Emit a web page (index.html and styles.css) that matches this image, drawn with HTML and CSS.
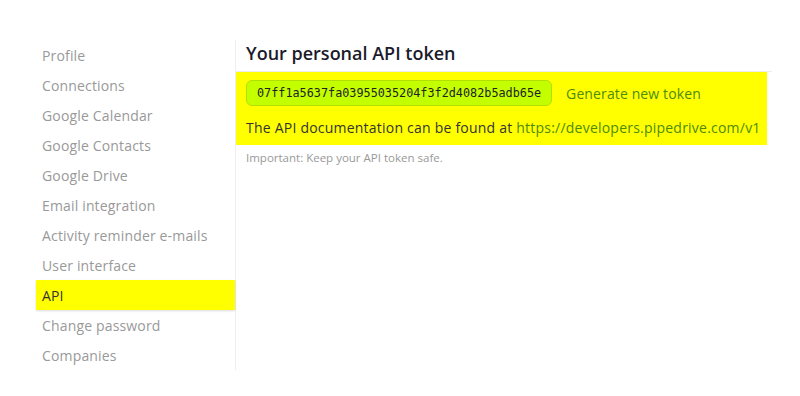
FILE: index.html
```html
<!DOCTYPE html>
<html lang="en">
<head>
  <meta charset="UTF-8">
  <title>Settings - API</title>
  <link rel="stylesheet" href="styles.css">
</head>
<body>
  <div class="container">
    <ul class="sidebar">
      <li><a href="#">Profile</a></li>
      <li><a href="#">Connections</a></li>
      <li><a href="#">Google Calendar</a></li>
      <li><a href="#">Google Contacts</a></li>
      <li><a href="#">Google Drive</a></li>
      <li><a href="#">Email integration</a></li>
      <li><a href="#">Activity reminder e-mails</a></li>
      <li><a href="#">User interface</a></li>
      <li class="selected"><a href="#">API</a></li>
      <li><a href="#">Change password</a></li>
      <li><a href="#">Companies</a></li>
    </ul>
    <div class="main">
      <h1>Your personal API token</h1>
      <div class="token-section">
        <div class="token-box">
          <div class="token-row">
            <span class="token">07ff1a5637fa03955035204f3f2d4082b5adb65e</span>
            <a href="#" class="generate">Generate new token</a>
          </div>
          <p class="docs">The API documentation can be found at <a href="#">https://developers.pipedrive.com/v1</a></p>
        </div>
        <p class="note">Important: Keep your API token safe.</p>
      </div>
    </div>
  </div>
</body>
</html>
```

FILE: styles.css
```css
body {
  font-family: "Open Sans", sans-serif;
  background: white;
  margin: 0;
  padding: 40px 0 0 36px;
}
.container {
  display: flex;
}
.sidebar {
  list-style: none;
  margin: 0;
  padding: 0;
  width: 199px;
  border-right: 1px solid #eee;
}
.sidebar li {
  height: 30px;
  font-size: 14px;
  letter-spacing: 0.16px;
}
.sidebar a {
  display: block;
  padding: 2px 0 0 6px;
  line-height: 28px;
  color: #999;
  text-decoration: none;
}
.sidebar .selected {
  background: #ffff00;
  box-shadow: 0 1px 2px rgba(0,0,0,0.15);
}
.sidebar .selected a {
  color: #333;
}
.main {
  width: 536px;
}
h1 {
  font-size: 18px;
  font-weight: 600;
  color: #1b1b2a;
  margin: 0;
  padding-left: 10px;
  height: 31px;
  line-height: 26px;
}
.token-section {
  border-top: 1px solid #eee;
}
.token-box {
  background: #ffff00;
  width: 521px;
  padding: 8px 0 0 10px;
  height: 65px;
}
.token-row {
  display: flex;
  align-items: center;
  gap: 14px;
}
.token {
  font-family: "DejaVu Sans Mono", monospace;
  font-size: 11.8px;
  color: #222;
  background: #c4ff00;
  border: 1px solid #b2e000;
  border-radius: 6px;
  padding: 0 10px;
  height: 24px;
  line-height: 24px;
}
.generate {
  font-size: 14px;
  letter-spacing: 0.12px;
  color: #4e8a0c;
  text-decoration: none;
}
.docs {
  font-size: 14px;
  letter-spacing: 0.22px;
  color: #333;
  margin: 12px 0 0;
}
.docs a {
  color: #4e8a0c;
  text-decoration: none;
}
.note {
  font-size: 11.5px;
  color: #999;
  margin: 5px 0 0 10px;
}
```
